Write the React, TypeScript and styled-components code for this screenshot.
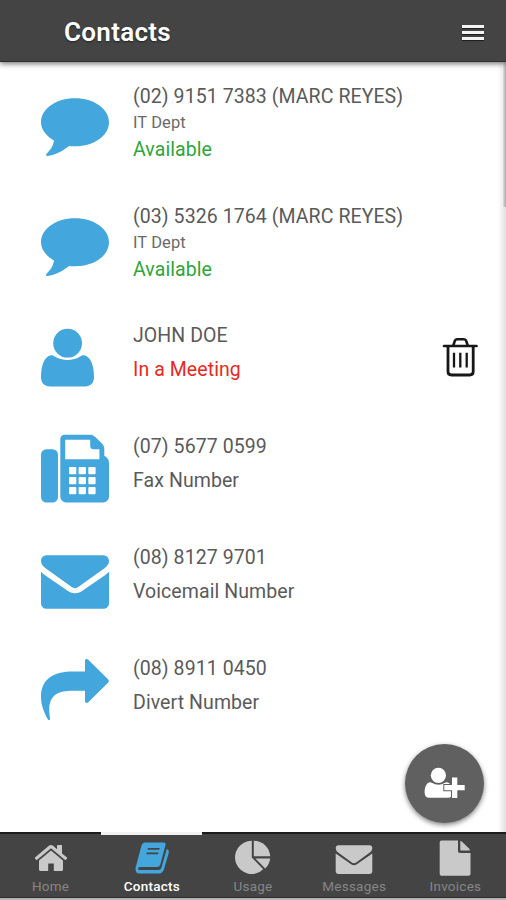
import React, { useState } from "react";
import styled, { createGlobalStyle } from "styled-components";

/* --- Styled Components --- */

const GlobalStyle = createGlobalStyle`
  * {
    box-sizing: border-box;
  }

  body {
    margin: 0;
    background: #ffffff;
    font-family: Roboto, "Liberation Sans", sans-serif;
  }

  button {
    font: inherit;
    border: none;
    padding: 0;
    background: none;
    cursor: pointer;
  }
`;

const Screen = styled.div`
  position: relative;
  display: flex;
  flex-direction: column;
  width: 506px;
  height: 900px;
  overflow: hidden;
  background: #ffffff;
`;

const Header = styled.header`
  display: flex;
  align-items: center;
  justify-content: space-between;
  flex: none;
  height: 62px;
  padding: 0 22px 0 64px;
  background: #444444;
  border-bottom: 1px solid #303030;
  box-shadow: 0 2px 5px rgba(0, 0, 0, 0.5);
`;

const Title = styled.h1`
  margin: 0;
  padding-top: 3px;
  font-size: 26px;
  font-weight: 600;
  letter-spacing: 0.3px;
  color: #ffffff;
  text-shadow: 0 1px 2px rgba(0, 0, 0, 0.5);
`;

const MenuButton = styled.button`
  display: flex;
  flex-direction: column;
  gap: 3px;
  margin-top: 3px;
`;

const MenuBar = styled.span`
  width: 22px;
  height: 3px;
  background: #f4f4f4;
  box-shadow: 0 1px 1px rgba(0, 0, 0, 0.6);
`;

const List = styled.ul`
  flex: 1;
  margin: 0;
  padding: 0;
  list-style: none;
`;

const Row = styled.li<{ $tall?: boolean }>`
  display: flex;
  align-items: flex-start;
  height: ${(p) => (p.$tall ? "119.5px" : "111px")};
  padding: 20px 28px 0 41px;
`;

const RowIcon = styled.svg<{ $low?: boolean }>`
  flex: none;
  width: 68px;
  height: 72px;
  margin-top: ${(p) => (p.$low ? "8px" : "0")};
  margin-right: 24px;
  fill: #43a6dd;
`;

const Details = styled.div<{ $tall?: boolean }>`
  display: flex;
  flex: 1;
  flex-direction: column;
  gap: ${(p) => (p.$tall ? "0" : "6px")};
  padding-top: 1.4px;
`;

const Line = styled.span<{ $color?: string }>`
  font-size: 19.5px;
  line-height: 28px;
  letter-spacing: 0.08px;
  white-space: nowrap;
  color: ${(p) => p.$color || "#5a5a5a"};
`;

const Department = styled.span`
  padding-bottom: 2px;
  font-size: 16.5px;
  line-height: 23px;
  letter-spacing: 0.1px;
  color: #6a6a6a;
  display: block;
`;

const DeleteButton = styled.button`
  display: flex;
  margin-top: 16px;
`;

const Fab = styled.button`
  position: absolute;
  right: 22px;
  bottom: 77px;
  display: flex;
  align-items: center;
  justify-content: center;
  width: 79px;
  height: 79px;
  border-radius: 50%;
  background: #606060;
  box-shadow: 0 2px 5px rgba(0, 0, 0, 0.5);
`;

const ScrollEdge = styled.div`
  position: absolute;
  top: 62px;
  right: 0;
  width: 8px;
  height: 770px;
  background: linear-gradient(to right, rgba(0, 0, 0, 0), rgba(0, 0, 0, 0.12));
`;

const ScrollThumb = styled.div`
  width: 3px;
  height: 145px;
  margin-left: auto;
  background: linear-gradient(to right, rgba(0, 0, 0, 0.05), rgba(0, 0, 0, 0.25));
`;

const TabBar = styled.nav`
  display: flex;
  flex: none;
  height: 68px;
  background: #444444;
  border-bottom: 2px solid #b4b4b4;
`;

const Tab = styled.button<{ $active: boolean }>`
  display: flex;
  flex: 1;
  flex-direction: column;
  align-items: center;
  border-top: ${(p) => (p.$active ? "3px solid #f2f2f2" : "2px solid #1c1c1c")};
  border-bottom: 1px solid #2c2c2c;
  padding-top: ${(p) => (p.$active ? "4px" : "5px")};
  color: ${(p) => (p.$active ? "#ffffff" : "#868686")};
  font-weight: ${(p) => (p.$active ? 500 : 400)};
`;

const TabIcon = styled.svg<{ $active: boolean }>`
  flex: none;
  width: 40px;
  height: 38px;
  fill: ${(p) => (p.$active ? "#43a6dd" : "#c9c9c9")};
`;

const TabLabel = styled.span`
  margin-top: 1px;
  font-size: 13.5px;
  line-height: 16px;
  letter-spacing: 0.25px;
`;

/* --- Icons --- */

const icons = {
  comment: (
    <path d="M34 8.3C53 8.3 68 18.8 68 32.3S53 56.3 34 56.3Q31 56.3 28 55.9C22 61 14 65 6.5 66C5 66 4.6 65 5.5 64C9 60 12 57 13 50.5C5 46 0 39.5 0 32.3C0 18.8 15 8.3 34 8.3Z" />
  ),
  user: (
    <>
      <circle cx="26.6" cy="22.2" r="14.4" />
      <path d="M10 34.2C3 35.5 0 45 0 56C0 62 3.5 65.5 9 65.5H44C49.5 65.5 53 62 53 56C53 45 50 35.5 43 34.2C41.5 34 40.5 34.5 39.5 35.3C32 40.3 21 40.3 13.5 35.3C12.5 34.5 11.5 34 10 34.2Z" />
    </>
  ),
  fax: (
    <>
      <rect x="0" y="17.2" width="17" height="53.3" rx="5.5" />
      <path
        fillRule="evenodd"
        d="M23.5 2.7H49C51 2.7 52.5 3.3 54 4.8L61 11.5C62.5 13 63.3 14.5 63.3 17V23.8C66 25 68 27.5 68 31V64C68 68 65.5 70.5 61.5 70.5H26C22 70.5 19.3 68 19.3 64V7C19.3 4.3 21 2.7 23.5 2.7ZM24.2 7.7V27.3H58.4V17.3H52.5C50.5 17.3 49.2 16 49.2 14V7.7ZM29 35.1H34.3Q35.3 35.1 35.3 36.1V41.3Q35.3 42.3 34.3 42.3H29Q28 42.3 28 41.3V36.1Q28 35.1 29 35.1ZM38.6 35.1H43.9Q44.9 35.1 44.9 36.1V41.3Q44.9 42.3 43.9 42.3H38.6Q37.6 42.3 37.6 41.3V36.1Q37.6 35.1 38.6 35.1ZM48.3 35.1H53.6Q54.6 35.1 54.6 36.1V41.3Q54.6 42.3 53.6 42.3H48.3Q47.3 42.3 47.3 41.3V36.1Q47.3 35.1 48.3 35.1ZM29 45H34.3Q35.3 45 35.3 46V51.2Q35.3 52.2 34.3 52.2H29Q28 52.2 28 51.2V46Q28 45 29 45ZM38.6 45H43.9Q44.9 45 44.9 46V51.2Q44.9 52.2 43.9 52.2H38.6Q37.6 52.2 37.6 51.2V46Q37.6 45 38.6 45ZM48.3 45H53.6Q54.6 45 54.6 46V51.2Q54.6 52.2 53.6 52.2H48.3Q47.3 52.2 47.3 51.2V46Q47.3 45 48.3 45ZM29 55H34.3Q35.3 55 35.3 56V61.2Q35.3 62.2 34.3 62.2H29Q28 62.2 28 61.2V56Q28 55 29 55ZM38.6 55H43.9Q44.9 55 44.9 56V61.2Q44.9 62.2 43.9 62.2H38.6Q37.6 62.2 37.6 61.2V56Q37.6 55 38.6 55ZM48.3 55H53.6Q54.6 55 54.6 56V61.2Q54.6 62.2 53.6 62.2H48.3Q47.3 62.2 47.3 61.2V56Q47.3 55 48.3 55Z"
      />
    </>
  ),
  envelope: (
    <>
      <path d="M6 12.2H62C66 12.2 68 15 68 18C68 21 66 23.5 63.5 25.3L40 42C37 44.1 35.5 45.3 34 45.3S31 44.1 28 42L4.5 25.3C2 23.5 0 21 0 18C0 14.5 2.5 12.2 6 12.2Z" />
      <path d="M0 28.8C1.2 30 2.5 31.2 4 32.2L25.5 47C28.5 49.2 31 50.3 34 50.3S39.5 49.2 42.5 47L64 32.2C65.5 31.2 66.8 30 68 28.8V60C68 63.5 65.5 65.8 62 65.8H6C2.5 65.8 0 63.5 0 60Z" />
    </>
  ),
  divert: (
    <path d="M44 7C44 5 46 4.5 47.3 5.8L67 25.2Q68.7 27 67 28.8L47.3 48.2C46 49.5 44 49 44 47V36.8H32C17 36.8 7.5 41 8.3 58C8.4 60.5 8.8 62.5 9 64.5C9 66.3 7.6 66.6 6.8 65.2C3 58.5 0 51 0 43C0 24 14 17.6 32 17.6H44Z" />
  ),
};

const tabIcons = {
  home: (
    <path d="M20 11.5L8 21.5V30.5Q8 32 9.5 32H17.2V24.5H22.8V32H30.5Q32 32 32 30.5V21.5ZM36 18.5L31 14.4V6.6Q31 6 30.3 6H26.8Q26 6 26 6.7V10.2L21.8 6.6Q20 5.2 18.2 6.6L4 18.5Q3.6 19 4 19.4L5.2 20.8Q5.7 21.2 6.2 20.8L20 9.3L33.8 20.8Q34.3 21.2 34.8 20.8L36 19.4Q36.4 19 36 18.5Z" />
  ),
  book: (
    <path
      fillRule="evenodd"
      d="M13 3.5H31.5Q34.2 3.5 33.4 6.5L28.3 25.5Q27.6 28 25 28H8Q6 28 6 29.7Q6 31 8 31H26.5Q28.6 31 29.3 29L34.8 10Q37.5 11 36.7 14L31.8 30.8Q30.5 34.5 27 34.5H7.5Q3.5 34.5 3.5 30Q3.6 28 4.3 26L9.4 7Q10.3 3.5 13 3.5ZM16 8.9L15.4 10.7H27.2L27.8 8.9ZM14.8 13.5L14.2 15.3H26L26.6 13.5Z"
    />
  ),
  pie: (
    <>
      <path d="M18.8 1.8V18.5L30.2 30.3A16.6 16.6 0 1 1 18.8 1.8Z" />
      <path d="M20.8 1.8A16.6 16.6 0 0 1 37.2 17.2H20.8Z" />
      <path d="M22.4 19.4H37.2A16.6 16.6 0 0 1 32.2 29.4Z" />
    </>
  ),
  envelope: (
    <>
      <path d="M4.5 6.3H35.5Q38.3 6.3 38.3 9.3Q38.3 11.8 35.5 13.8L22.5 23.3Q20 25 17.5 23.3L4.5 13.8Q1.7 11.8 1.7 9.3Q1.7 6.3 4.5 6.3Z" />
      <path d="M1.7 14.4L17.5 25.4Q20 27 22.5 25.4L38.3 14.4V32Q38.3 35 35.3 35H4.7Q1.7 35 1.7 32Z" />
    </>
  ),
  file: (
    <>
      <path d="M6.5 1.5H23V12Q23 14 25 14H35.5V35Q35.5 36.7 33.8 36.7H6.5Q4.7 36.7 4.7 35V3.3Q4.7 1.5 6.5 1.5Z" />
      <path d="M25.3 2V11.6H35Q34.8 10.5 34 9.6L27.3 3Q26.4 2.2 25.3 2Z" />
    </>
  ),
};

const TrashIcon = () => (
  <svg width="36" height="40" viewBox="442 337 36 40" fill="none" stroke="#171717">
    <path d="M444 346H476.5" strokeWidth="2.6" strokeLinecap="round" />
    <path d="M453.3 345.5L454.8 340.8Q455.3 339.2 457 339.2H464Q465.7 339.2 466.2 340.8L467.7 345.5" strokeWidth="2.6" />
    <path d="M448 346.5V371.5Q448 375 451.5 375H469.7Q473.2 375 473.2 371.5V346.5" strokeWidth="2.8" />
    <path d="M454 352.7V367.5M460.3 352.7V367.5M466.7 352.7V367.5" strokeWidth="2.3" />
  </svg>
);

const AddUserIcon = () => (
  <svg width="44" height="34" viewBox="423 767 44 34" fill="#ffffff">
    <circle cx="438.4" cy="775.3" r="7.6" />
    <path d="M429.8 782.2C425.8 783 424.6 788 424.6 792.5C424.6 796 426.3 797.8 429.3 797.8H448C451 797.8 452.5 796 452.5 792.5C452.5 788 451 783 447 782.2Q446 782 445 782.8Q438.4 786.8 431.8 782.8Q430.8 782 429.8 782.2Z" />
    <path
      d="M452 777.5H457.3V785H464.7V790.3H457.3V798H452V790.3H444.3V785H452Z"
      stroke="#606060"
      strokeWidth="2"
      paintOrder="stroke"
    />
  </svg>
);

/* --- Data --- */

interface Contact {
  icon: keyof typeof icons;
  name: string;
  dept?: string;
  detail: string;
  color?: string;
  removable?: boolean;
}

const contacts: Contact[] = [
  {
    icon: "comment",
    name: "(02) 9151 7383 (MARC REYES)",
    dept: "IT Dept",
    detail: "Available",
    color: "#2fa53a",
  },
  {
    icon: "comment",
    name: "(03) 5326 1764 (MARC REYES)",
    dept: "IT Dept",
    detail: "Available",
    color: "#2fa53a",
  },
  {
    icon: "user",
    name: "JOHN DOE",
    detail: "In a Meeting",
    color: "#e8281e",
    removable: true,
  },
  { icon: "fax", name: "(07) 5677 0599", detail: "Fax Number" },
  { icon: "envelope", name: "(08) 8127 9701", detail: "Voicemail Number" },
  { icon: "divert", name: "(08) 8911 0450", detail: "Divert Number" },
];

const tabs: { label: string; icon: keyof typeof tabIcons }[] = [
  { label: "Home", icon: "home" },
  { label: "Contacts", icon: "book" },
  { label: "Usage", icon: "pie" },
  { label: "Messages", icon: "envelope" },
  { label: "Invoices", icon: "file" },
];

/* --- Component --- */

const App: React.FC = () => {
  const [activeTab, setActiveTab] = useState<string>("Contacts");

  return (
    <Screen>
      <GlobalStyle />

      {/* HEADER */}
      <Header>
        <Title>Contacts</Title>
        <MenuButton aria-label="Menu">
          <MenuBar />
          <MenuBar />
          <MenuBar />
        </MenuButton>
      </Header>

      {/* CONTACTS */}
      <List>
        {contacts.map((c) => (
          <Row key={c.name} $tall={!!c.dept}>
            <RowIcon viewBox="0 0 68 72" $low={!!c.dept}>
              {icons[c.icon]}
            </RowIcon>
            <Details $tall={!!c.dept}>
              <Line>{c.name}</Line>
              {c.dept && <Department>{c.dept}</Department>}
              <Line $color={c.color}>{c.detail}</Line>
            </Details>
            {c.removable && (
              <DeleteButton aria-label="Delete">
                <TrashIcon />
              </DeleteButton>
            )}
          </Row>
        ))}
      </List>

      <ScrollEdge>
        <ScrollThumb />
      </ScrollEdge>

      <Fab aria-label="Add contact">
        <AddUserIcon />
      </Fab>

      {/* TABS */}
      <TabBar>
        {tabs.map((t) => (
          <Tab
            key={t.label}
            $active={t.label === activeTab}
            onClick={() => setActiveTab(t.label)}
          >
            <TabIcon viewBox="0 0 40 38" $active={t.label === activeTab}>
              {tabIcons[t.icon]}
            </TabIcon>
            <TabLabel>{t.label}</TabLabel>
          </Tab>
        ))}
      </TabBar>
    </Screen>
  );
};

export default App;
